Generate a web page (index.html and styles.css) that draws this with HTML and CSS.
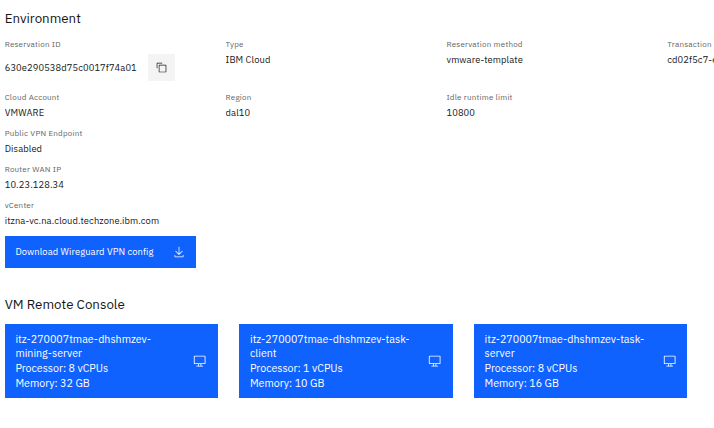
FILE: index.html
```
<!DOCTYPE html>
<html lang="en">
<head>
<meta charset="utf-8">
<title>Environment</title>
<link rel="stylesheet" href="styles.css">
</head>
<body>
<main class="page">
  <section class="environment">
    <h2 class="heading">Environment</h2>
    <dl class="details">
      <div class="item">
        <dt>Reservation ID</dt>
        <dd class="copyable">
          <span>630e290538d75c0017f74a01</span>
          <button class="copy" aria-label="Copy">
            <svg class="copy-icon" viewBox="0 0 32 32"><path d="M28 10v18H10V10h18m0-2H10a2 2 0 0 0-2 2v18a2 2 0 0 0 2 2h18a2 2 0 0 0 2-2V10a2 2 0 0 0-2-2Z"/><path d="M4 18H2V4a2 2 0 0 1 2-2h14v2H4Z"/></svg>
          </button>
        </dd>
      </div>
      <div class="item"><dt>Type</dt><dd>IBM Cloud</dd></div>
      <div class="item"><dt>Reservation method</dt><dd>vmware-template</dd></div>
      <div class="item"><dt>Transaction</dt><dd>cd02f5c7-e</dd></div>
      <div class="item"><dt>Cloud Account</dt><dd>VMWARE</dd></div>
      <div class="item"><dt>Region</dt><dd>dal10</dd></div>
      <div class="item"><dt>Idle runtime limit</dt><dd>10800</dd></div>
    </dl>
    <dl class="network">
      <div class="item"><dt>Public VPN Endpoint</dt><dd>Disabled</dd></div>
      <div class="item"><dt>Router WAN IP</dt><dd>10.23.128.34</dd></div>
      <div class="item"><dt>vCenter</dt><dd>itzna-vc.na.cloud.techzone.ibm.com</dd></div>
    </dl>
    <button class="download">
      <span>Download Wireguard VPN config</span>
      <svg class="download-icon" viewBox="0 0 32 32"><path d="M26 24v4H6v-4H4v4a2 2 0 0 0 2 2h20a2 2 0 0 0 2-2v-4ZM26 14l-1.41-1.41L17 20.17V2h-2v18.17l-7.59-7.58L6 14l10 10Z"/></svg>
    </button>
  </section>
  <section class="consoles">
    <h2 class="heading">VM Remote Console</h2>
    <div class="cards">
      <button class="card">
        <span class="specs"><span>itz-270007tmae-dhshmzev-</span><span>mining-server</span><span>Processor: 8 vCPUs</span><span>Memory: 32 GB</span></span>
        <svg class="screen-icon" viewBox="0 0 32 32"><path d="M28 4H4a2 2 0 0 0-2 2v16a2 2 0 0 0 2 2h8v4H8v2h16v-2h-4v-4h8a2 2 0 0 0 2-2V6a2 2 0 0 0-2-2ZM18 28h-4v-4h4Zm10-6H4V6h24Z"/></svg>
      </button>
      <button class="card">
        <span class="specs"><span>itz-270007tmae-dhshmzev-task-</span><span>client</span><span>Processor: 1 vCPUs</span><span>Memory: 10 GB</span></span>
        <svg class="screen-icon" viewBox="0 0 32 32"><path d="M28 4H4a2 2 0 0 0-2 2v16a2 2 0 0 0 2 2h8v4H8v2h16v-2h-4v-4h8a2 2 0 0 0 2-2V6a2 2 0 0 0-2-2ZM18 28h-4v-4h4Zm10-6H4V6h24Z"/></svg>
      </button>
      <button class="card">
        <span class="specs"><span>itz-270007tmae-dhshmzev-task-</span><span>server</span><span>Processor: 8 vCPUs</span><span>Memory: 16 GB</span></span>
        <svg class="screen-icon" viewBox="0 0 32 32"><path d="M28 4H4a2 2 0 0 0-2 2v16a2 2 0 0 0 2 2h8v4H8v2h16v-2h-4v-4h8a2 2 0 0 0 2-2V6a2 2 0 0 0-2-2ZM18 28h-4v-4h4Zm10-6H4V6h24Z"/></svg>
      </button>
    </div>
  </section>
</main>
</body>
</html>
```
FILE: styles.css
```
* { box-sizing: border-box; }

body {
  margin: 0;
  background: #fff;
  color: #161616;
  font-family: "IBM Plex Sans", "Noto Sans", sans-serif;
}

button {
  border: 0;
  font-family: inherit;
  text-align: left;
}

svg { fill: currentColor; flex: none; }

.page { padding: 8.3px 0 0 4.7px; }

.heading {
  margin: 0;
  font-size: 13.33px;
  font-weight: 400;
  line-height: 20px;
}

.details,
.network { margin: 0; }

.details {
  display: grid;
  grid-template-columns: repeat(3, 220.9px) 1fr;
  grid-template-rows: 53.3px 36px;
  padding-top: 7.7px;
}

.item {
  min-width: 0;
  overflow: hidden;
  white-space: nowrap;
}

.network .item { height: 36px; }

dt {
  color: #636363;
  font-size: 8px;
  line-height: 16px;
  letter-spacing: 0.213px;
}

dd {
  margin: 0;
  font-size: 9.33px;
  line-height: 15px;
  letter-spacing: 0.107px;
}

.copyable {
  display: flex;
  align-items: center;
  gap: 11.2px;
  padding-top: 2px;
}

.copy {
  display: grid;
  place-items: center;
  width: 26.6px;
  height: 27px;
  padding: 0;
  background: #f4f4f4;
  color: #161616;
}

.copy-icon { width: 11px; height: 11px; }

.download {
  display: flex;
  align-items: center;
  justify-content: space-between;
  width: 191.6px;
  height: 32px;
  margin-top: 2.7px;
  padding: 0 11px 0 10.7px;
  background: #0f62fe;
  color: #fff;
  font-size: 9.33px;
  letter-spacing: 0.107px;
}

.download-icon { width: 12px; height: 12px; }

.consoles { padding-top: 26px; }

.cards {
  display: flex;
  gap: 21.3px;
  padding-top: 9.8px;
}

.card {
  display: flex;
  align-items: center;
  justify-content: space-between;
  width: 213.3px;
  height: 74.6px;
  padding: 0 11.3px 0 10.7px;
  background: #0f62fe;
  color: #fff;
  font-size: 10.67px;
  line-height: 14.67px;
}

.specs {
  display: flex;
  flex-direction: column;
  white-space: nowrap;
}

.screen-icon { width: 13.33px; height: 13.33px; }
```
